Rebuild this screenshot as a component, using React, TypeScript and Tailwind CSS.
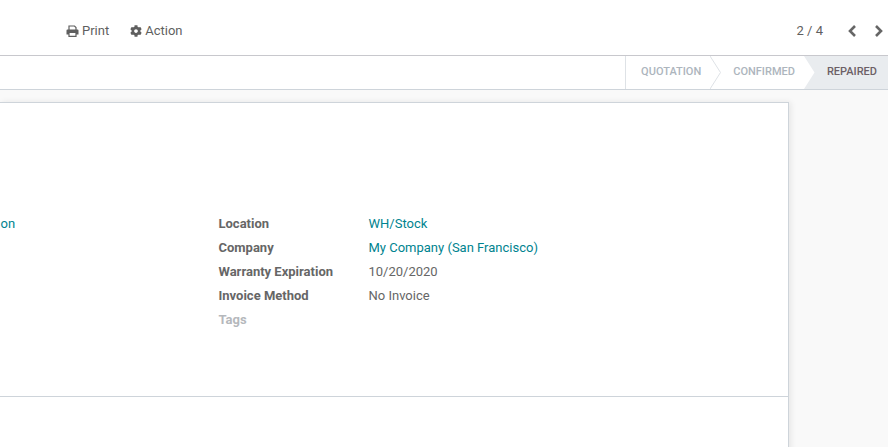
import { FaCog } from "react-icons/fa";

const FIELDS = [
  { label: "Location", value: "WH/Stock", link: true },
  { label: "Company", value: "My Company (San Francisco)", link: true },
  { label: "Warranty Expiration", value: "10/20/2020" },
  { label: "Invoice Method", value: "No Invoice" },
  { label: "Tags", value: "", muted: true },
];

function PrintIcon() {
  return (
    <svg width="13" height="12" viewBox="0 0 13 12" className="fill-none stroke-[#5f5f5f]">
      <path d="M3 5V1h5.500L10 2.500V5" strokeWidth="1.2" />
      <path d="M1.500 4.500h10a1 1 0 0 1 1 1V9.500h-12V5.500a1 1 0 0 1 1-1z" fill="#5f5f5f" stroke="none" />
      <path d="M3 7.500h7v3.900H3z" fill="#fff" strokeWidth="1.2" />
    </svg>
  );
}

function Pager({ dir }: { dir: "left" | "right" }) {
  return (
    <svg width="9" height="12" viewBox="0 0 9 12" className="fill-none stroke-[#666666]">
      <path d={dir === "left" ? "M7 1L2 6l5 5" : "M2 1l5 5-5 5"} strokeWidth="2.6" />
    </svg>
  );
}

function Chevron() {
  return (
    <svg width="11" height="33" viewBox="0 0 11 33" className="shrink-0">
      <path d="M0 0l10.500 16.500L0 33" fill="#fff" stroke="#dee2e6" />
    </svg>
  );
}

export default function App() {
  return (
    <div
      className="flex h-[447px] w-[888px] flex-col overflow-hidden bg-[#f9f9f9] text-[13px] text-[#4c4c4c]"
      style={{ fontFamily: "Roboto, sans-serif" }}
    >
      <div className="flex h-[56px] shrink-0 items-center border-b border-[#c8c8cd] bg-white pl-[66px] pr-[5px] pt-[6px]">
        <div className="flex items-center gap-[3px] text-[#5f5f5f]">
          <PrintIcon />
          <span>Print</span>
        </div>
        <div className="ml-[21px] flex items-center gap-[3px] text-[#5f5f5f]">
          <FaCog size={12} />
          <span>Action</span>
        </div>
        <span className="ml-auto text-[#5f5f5f]">2 / 4</span>
        <div className="ml-[25px] flex items-center gap-[17px]">
          <Pager dir="left" />
          <Pager dir="right" />
        </div>
      </div>

      <div className="flex h-[34px] shrink-0 justify-end border-b border-[#ced4da] bg-white text-[11px] font-medium uppercase">
        <div className="flex items-center border-l border-[#dee2e6]">
          <span className="pl-[15px] pr-[9px] text-[#adb5bd]">Quotation</span>
          <Chevron />
          <span className="pl-[12px] pr-[9px] text-[#adb5bd]">Confirmed</span>
          <div className="flex h-full items-center bg-[#e9ecef] pr-[11px]">
            <svg width="11" height="33" viewBox="0 0 11 33" className="shrink-0">
              <path d="M0 0l10.500 16.500L0 33z" fill="#fff" />
            </svg>
            <span className="pl-[12px] text-[#6c5f66]">Repaired</span>
          </div>
        </div>
      </div>

      <div className="flex-1 pt-[12px]">
        <div className="h-[400px] w-[789px] border-r border-t border-[#ced4da] bg-white shadow-[2px_0_6px_rgba(0,0,0,0.08)]">
          <div className="flex h-[294px] border-b border-[#ced4da] pt-[109px]">
            <div className="w-[218.500px] shrink-0 pl-[0.500px] leading-[24px] text-[#00838f]">on</div>
            <div>
              {FIELDS.map((f) => (
                <div key={f.label} className="flex h-[24px] items-center">
                  <span className={`w-[150px] font-bold ${f.muted ? "text-[#b5b8bc]" : "text-[#666666]"}`}>
                    {f.label}
                  </span>
                  <span className={f.link ? "text-[#00838f]" : "text-[#666666]"}>{f.value}</span>
                </div>
              ))}
            </div>
          </div>
        </div>
      </div>
    </div>
  );
}
